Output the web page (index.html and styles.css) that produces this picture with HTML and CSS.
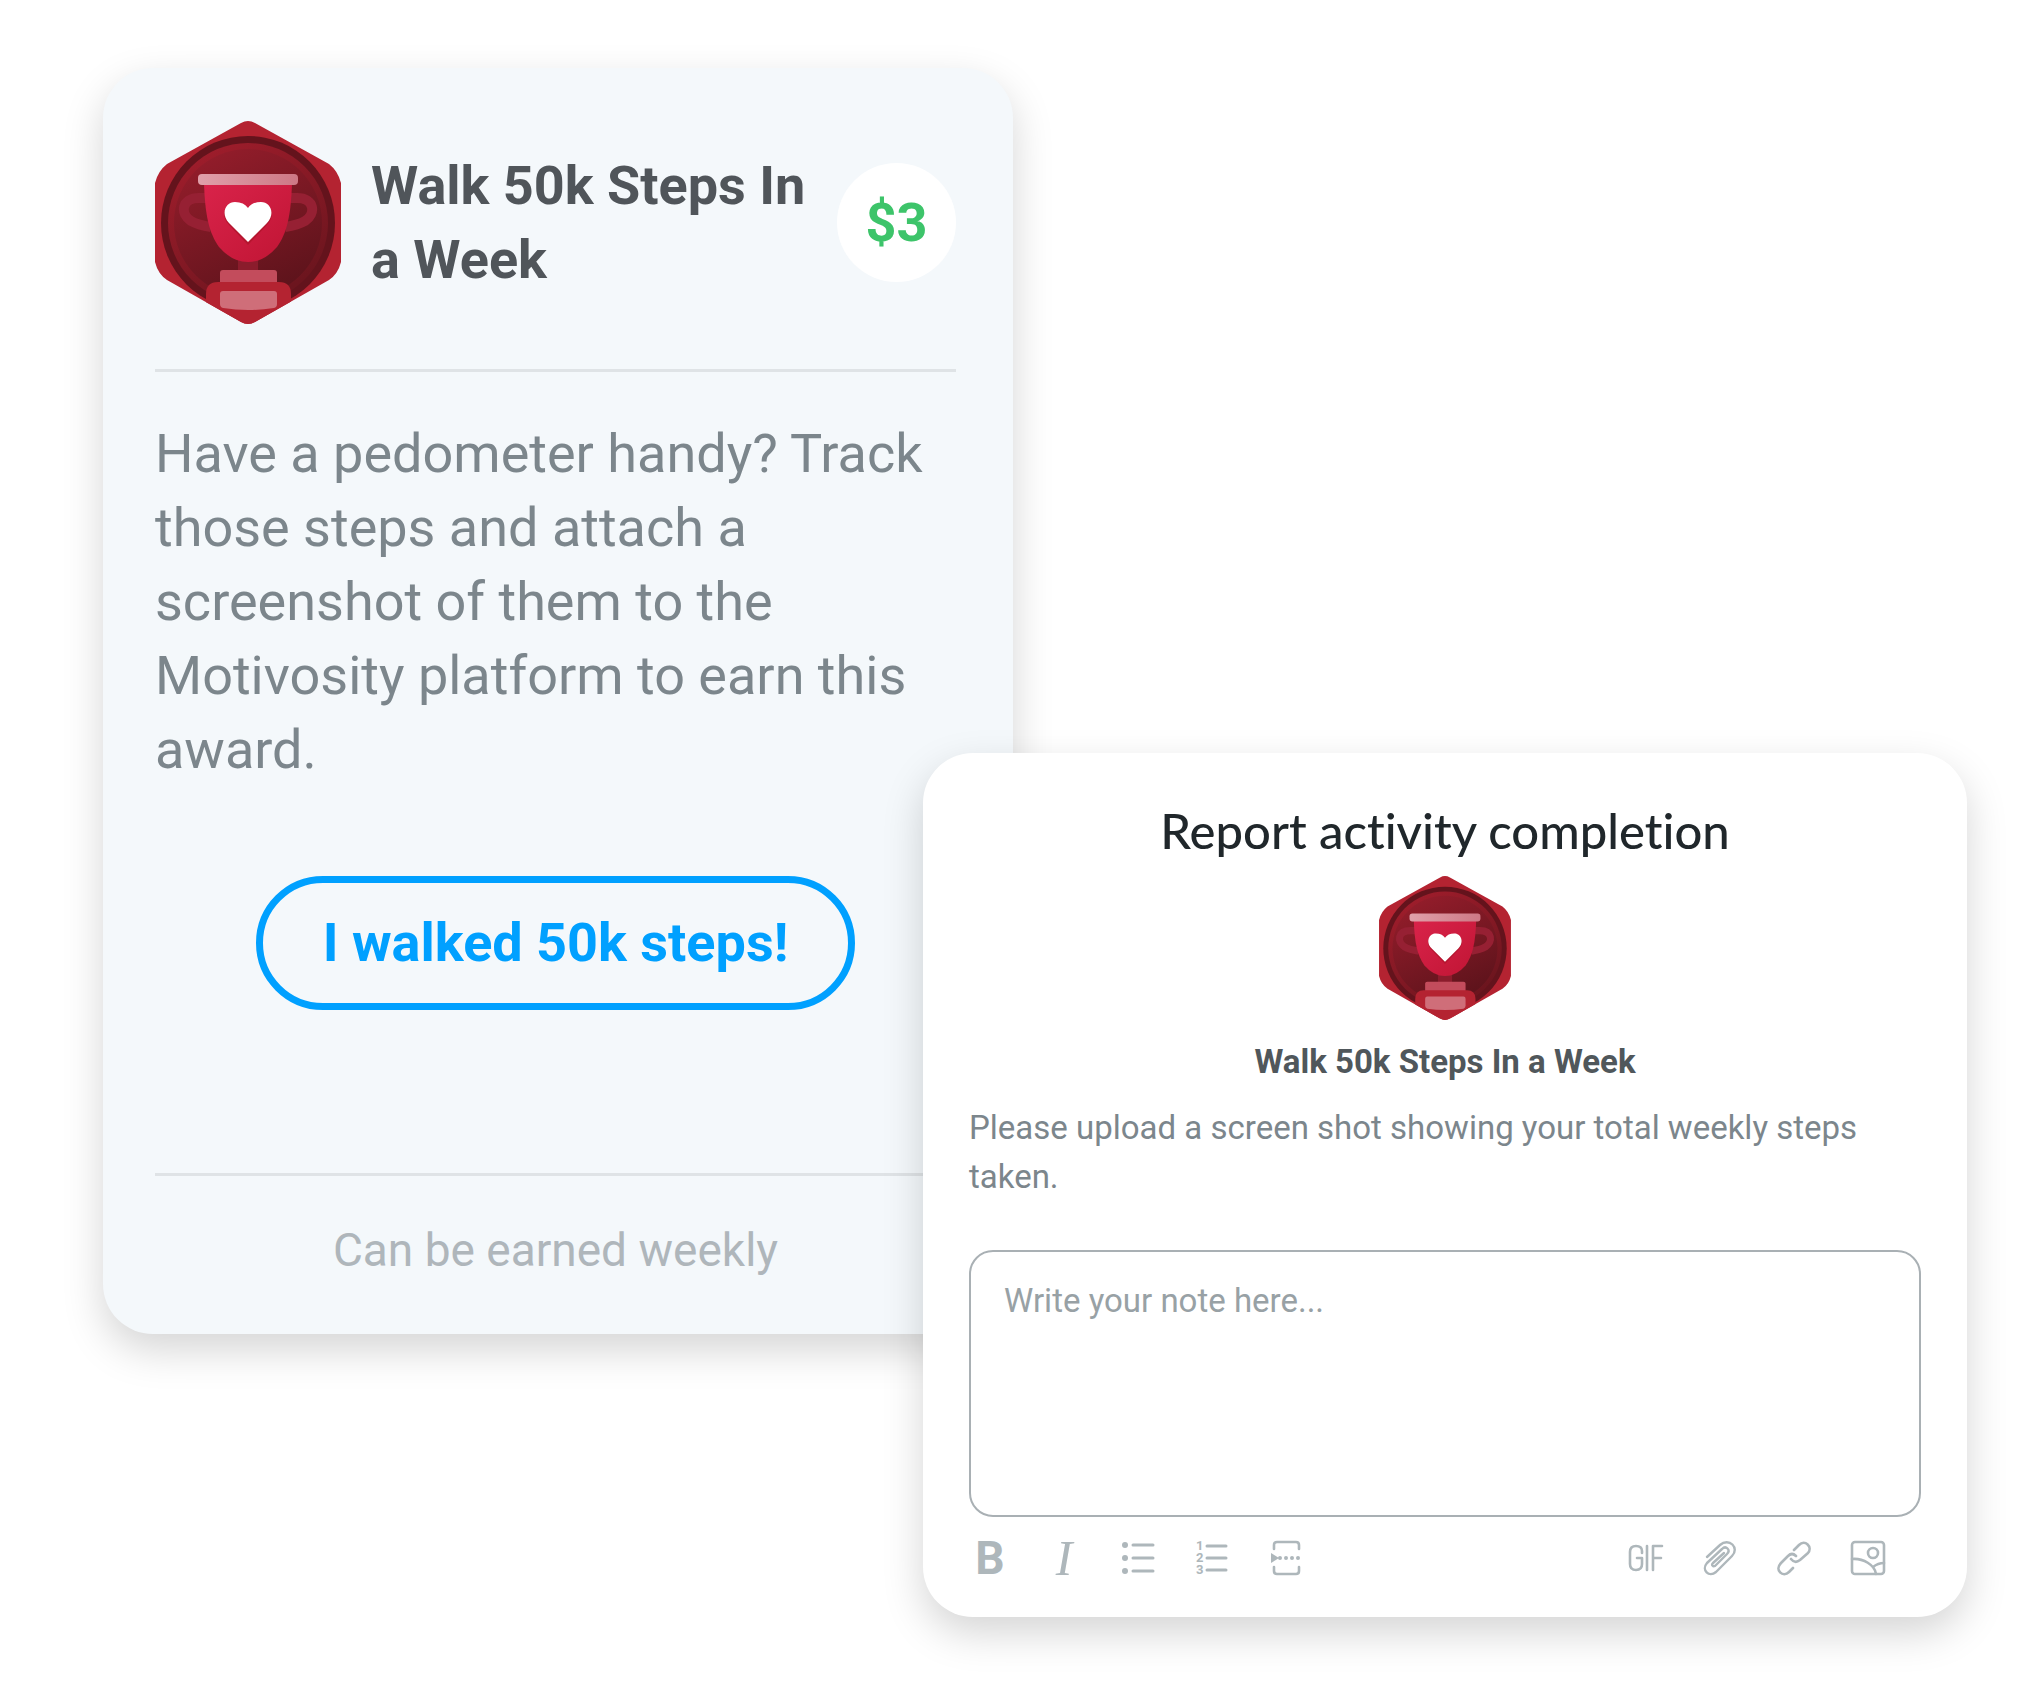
FILE: index.html
```
<!DOCTYPE html>
<html lang="en">
<head>
    <meta charset="utf-8">
    <title>Walk 50k Steps In a Week</title>
    <link rel="stylesheet" href="styles.css">
</head>
<body>
    <!-- Shared badge artwork -->
    <svg class="defs" aria-hidden="true">
        <defs>
            <linearGradient id="coin" x1="0.2" y1="0" x2="0.7" y2="1">
                <stop offset="0" stop-color="#951d2b"/>
                <stop offset="1" stop-color="#5c131b"/>
            </linearGradient>
            <linearGradient id="ring" x1="0" y1="0" x2="0.6" y2="1">
                <stop offset="0" stop-color="#a51e2d"/>
                <stop offset="1" stop-color="#6c151e"/>
            </linearGradient>
            <linearGradient id="cup" x1="0" y1="0" x2="1" y2="1">
                <stop offset="0" stop-color="#d9234a"/>
                <stop offset="1" stop-color="#c01534"/>
            </linearGradient>
            <linearGradient id="rim" x1="0" y1="0" x2="1" y2="0">
                <stop offset="0" stop-color="#e0a0aa"/>
                <stop offset="1" stop-color="#cd7885"/>
            </linearGradient>
            <clipPath id="hex">
                <path d="M86 2Q93 -2 100 2L174 43Q183 50 186 62V141Q183 153 174 159L100 201Q93 205 86 201L12 159Q3 153 0 141V62Q3 50 12 43Z"/>
            </clipPath>
        </defs>
        <symbol id="badge" viewBox="0 0 186 203">
            <g clip-path="url(#hex)">
                <rect width="186" height="203" fill="#b42331"/>
                <circle cx="93" cy="102" r="87" fill="#64131c"/>
                <circle cx="93" cy="102" r="80" fill="url(#ring)"/>
                <circle cx="93" cy="102" r="74" fill="url(#coin)"/>
                <path d="M51 77H44C26 77 25 93 36 100Q43 104 56 106M135 77H142C160 77 161 93 150 100Q143 104 130 106" fill="none" stroke="#962033" stroke-width="10"/>
                <path d="M83 136H103V152H83Z" fill="#8b1c2c"/>
                <path d="M49 62H137C136 94 132 112 122 126Q109 141 93 141T64 126C54 112 50 94 49 62Z" fill="url(#cup)"/>
                <rect x="43" y="53" width="100" height="11" rx="4" fill="url(#rim)"/>
                <path d="M93 124L74 104C64 93 71 83 80 83Q89 83 93 89Q97 83 106 83C115 83 122 93 112 104Z" fill="#b5162f"/>
                <path d="M93 121L74 102C65 92 71 81 80 81Q89 81 93 87Q97 81 106 81C115 81 121 92 112 102Z" fill="#fff"/>
                <rect x="65" y="149" width="57" height="18" rx="3" fill="#c34c5c"/>
                <path d="M51 203V173Q51 161 63 161H124Q136 161 136 173V203Z" fill="#b42331"/>
                <path d="M68 170H119Q122 170 122 173V183Q122 186 119 187Q93 191 68 187Q65 186 65 183V173Q65 170 68 170Z" fill="#cf6e79"/>
            </g>
        </symbol>
    </svg>

    <main class="stage">
        <article class="award">
            <header class="award-header">
                <svg class="award-badge" role="img" aria-label="Trophy badge"><use href="#badge"/></svg>
                <h2>Walk 50k Steps In a Week</h2>
                <span class="amount">$3</span>
            </header>
            <p class="award-text">Have a pedometer handy? Track those steps and attach a screenshot of them to the Motivosity platform to earn this award.</p>
            <button type="button" class="claim">I walked 50k steps!</button>
            <footer class="award-footer">Can be earned weekly</footer>
        </article>

        <form class="report">
            <h1>Report activity completion</h1>
            <svg class="report-badge" role="img" aria-label="Trophy badge"><use href="#badge"/></svg>
            <h3>Walk 50k Steps In a Week</h3>
            <label class="report-text" for="note">Please upload a screen shot showing your total weekly steps taken.</label>
            <textarea id="note" placeholder="Write your note here..."></textarea>
            <div class="toolbar">
                <button type="button" class="bold" aria-label="Bold">B</button>
                <button type="button" class="italic" aria-label="Italic">I</button>
                <button type="button" aria-label="Bulleted list">
                    <svg viewBox="0 0 34 34"><path d="M12 4H32M12 17H32M12 30H32" stroke-width="3"/><g class="solid"><circle cx="4" cy="4" r="3"/><circle cx="4" cy="17" r="3"/><circle cx="4" cy="30" r="3"/></g></svg>
                </button>
                <button type="button" aria-label="Numbered list">
                    <svg viewBox="0 0 34 34"><path d="M12 5H31M12 17H31M12 29H31" stroke-width="3"/><g class="digits"><text x="1" y="9">1</text><text x="1" y="21">2</text><text x="1" y="33">3</text></g></svg>
                </button>
                <button type="button" aria-label="Page break">
                    <svg viewBox="0 0 34 34"><path d="M5 8V4Q5 1 8 1H27Q30 1 30 4V8M5 26V30Q5 33 8 33H27Q30 33 30 30V26" stroke-width="2.6"/><path d="M11 17H30" stroke-width="4" stroke-dasharray="0 6"/><path class="solid" d="M2 12L10 17L2 22Z"/></svg>
                </button>
                <button type="button" class="push" aria-label="GIF">
                    <svg viewBox="0 0 34 34"><path d="M13 12V10Q13 5 7 5Q1 5 1 11V23Q1 29 7 29Q13 29 13 23V17H8M18 5V29M24 29V5H33M24 17H32" stroke-width="2.6"/></svg>
                </button>
                <button type="button" aria-label="Attach file">
                    <svg viewBox="0 0 34 34"><path d="M4 16L17 4C26 -4 37 7 29 15L13 31C6 37 -2 29 4 22L19 8C23 4 28 9 24 13L12 25C10 26 8 24 10 22L21 12" stroke-width="2.4"/></svg>
                </button>
                <button type="button" aria-label="Insert link">
                    <svg viewBox="0 0 34 34"><path d="M17 9L22 4C28 -2 36 6 31 12L23 19Q18 23 14 18M19 15Q15 11 11 15L4 22C-3 29 6 37 12 31L16 27" stroke-width="2.6"/></svg>
                </button>
                <button type="button" aria-label="Insert image">
                    <svg viewBox="0 0 34 34"><g stroke-width="2.6"><rect x="1" y="1" width="32" height="32" rx="3"/><circle cx="22" cy="12" r="5"/><path d="M1 18C12 17 24 24 25 33M22 26Q27 22 33 22"/></g></svg>
                </button>
            </div>
        </form>
    </main>
</body>
</html>
```

FILE: styles.css
```
* {
    box-sizing: border-box;
}
body {
    margin: 0;
    background: #fff;
    font-family: Roboto, sans-serif;
}
h1, h2, h3, p {
    margin: 0;
}
.defs {
    position: absolute;
    width: 0;
    height: 0;
}
/* The middle column is where the two cards overlap */
.stage {
    display: grid;
    grid-template-columns: minmax(0, 820fr) 90px minmax(0, 954fr);
    align-items: start;
    padding: 68px 73px 84px 103px;
}
.award,
.report {
    display: flex;
    flex-direction: column;
    grid-row: 1;
    border-radius: 50px;
    box-shadow: 0 16px 40px rgba(0, 0, 0, 0.17);
}

/* Award card */
.award {
    grid-column: 1 / 3;
    padding: 53px 57px 47px 52px;
    background: #f4f8fb;
}
.award-header {
    display: flex;
    align-items: center;
    padding-bottom: 45px;
    border-bottom: 3px solid #dfe3e6;
}
.award-badge {
    flex: none;
    width: 186px;
    height: 203px;
}
.award h2 {
    flex: 1;
    margin: 0 24px 0 30px;
    color: #50555a;
    font-size: 54px;
    font-weight: 700;
    line-height: 74px;
}
.amount {
    flex: none;
    width: 119px;
    border-radius: 50%;
    background: #fff;
    color: #3dc46a;
    font-size: 54px;
    font-weight: 700;
    line-height: 119px;
    text-align: center;
}
.award-text {
    margin-top: 45px;
    color: #7c868c;
    font-size: 54px;
    line-height: 74px;
}
.claim {
    align-self: center;
    margin: 89px 0 163px;
    padding: 0 60px;
    border: 7px solid #00a0ff;
    border-radius: 67px;
    background: transparent;
    color: #00a0ff;
    font: 700 54px/120px Roboto, sans-serif;
    cursor: pointer;
}
.award-footer {
    padding-top: 37px;
    border-top: 3px solid #dfe3e6;
    color: #afb6bb;
    font-size: 46px;
    line-height: 74px;
    text-align: center;
}

/* Report dialog, lies over the corner of the award card */
.report {
    grid-column: 2 / 4;
    margin-top: 685px;
    padding: 43px 46px 42px;
    background: #fff;
}
.report h1 {
    color: #20272b;
    font: 500 49px/68px Lato, sans-serif;
    font-variant-ligatures: none;
    text-align: center;
}
.report-badge {
    align-self: center;
    width: 132px;
    height: 144px;
    margin-top: 12px;
}
.report h3 {
    margin-top: 17px;
    color: #50575b;
    font-size: 33px;
    font-weight: 700;
    line-height: 49px;
    text-align: center;
}
.report-text {
    margin-top: 17px;
    color: #7c868c;
    font-size: 33px;
    line-height: 49px;
}
.report textarea {
    height: 267px;
    margin-top: 49px;
    padding: 24px 33px;
    border: 2px solid #a9b0b4;
    border-radius: 24px;
    color: #50575b;
    font: 400 33px/49px Roboto, sans-serif;
    resize: none;
}
.report textarea::placeholder {
    color: #98a1a5;
}
.toolbar {
    display: flex;
    gap: 40px;
    margin-top: 24px;
    padding: 0 36px 0 4px;
}
.toolbar button {
    width: 34px;
    height: 34px;
    padding: 0;
    border: 0;
    background: none;
    color: #aeb7bb;
    cursor: pointer;
}
.toolbar .push {
    margin-left: auto;
}
.toolbar svg {
    display: block;
    width: 34px;
    height: 34px;
    overflow: visible;
    fill: none;
    stroke: currentColor;
    stroke-linecap: round;
    stroke-linejoin: round;
}
.toolbar .solid,
.toolbar .digits {
    fill: currentColor;
    stroke: none;
}
.digits {
    font: 700 13px Roboto, sans-serif;
}
.bold {
    font: 700 46px/34px Roboto, sans-serif;
}
.italic {
    font: italic 400 50px/34px "Liberation Serif", serif;
}
```
